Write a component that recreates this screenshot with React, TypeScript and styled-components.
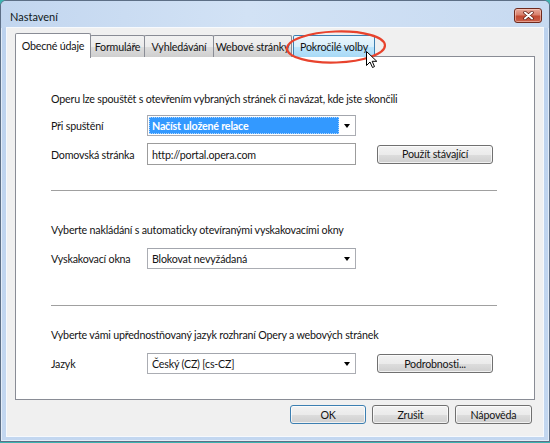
import React from 'react';
import styled, { createGlobalStyle, css } from 'styled-components';

const GlobalStyle = createGlobalStyle`
  html, body {
    margin: 0;
    padding: 0;
    background: #3db4b1;
  }
  body {
    font-family: Lato, 'Open Sans', sans-serif;
    font-size: 10.7px;
    letter-spacing: -0.2px;
    color: #141414;
  }
`;

const Screen = styled.div`
  width: 550px;
  height: 443px;
  background: #3db4b1;
  position: relative;
  overflow: hidden;
`;

const Window = styled.div`
  box-sizing: border-box;
  width: 550px;
  height: 442px;
  border: 1px solid #5d6f86;
  border-radius: 6px 6px 0 0;
  background: linear-gradient(180deg, #c9dbf1 0px, #bcd2ee 30px, #c3d7f0 100%);
  display: flex;
  flex-direction: column;
  box-shadow: inset 0 0 0 1px rgba(255, 255, 255, 0.55);
`;

const TitleBar = styled.div`
  height: 27px;
  display: flex;
  align-items: center;
  justify-content: space-between;
  padding: 0 7px 0 9px;
  background: linear-gradient(90deg, #c2d6ef 0%, #d2e2f5 45%, #c7daf1 100%);
  border-radius: 5px 5px 0 0;
`;

const Title = styled.span`
  font-size: 11px;
  letter-spacing: 0;
  color: #101820;
  padding-top: 3px;
`;

const CloseButton = styled.div`
  box-sizing: border-box;
  width: 28px;
  height: 15px;
  margin-top: 2px;
  border: 1px solid #6f2a1e;
  border-radius: 3px;
  background: linear-gradient(180deg, #e9a99a 0%, #d9806c 45%, #c24a32 55%, #c9604a 100%);
  display: flex;
  align-items: center;
  justify-content: center;
  box-shadow: inset 0 0 0 1px rgba(255, 220, 210, 0.5);
`;

const Client = styled.div`
  flex: 1;
  margin: 0 6px 5px;
  padding: 5px 8px 0;
  background: #f0f0f0;
  box-shadow: 0 0 0 1px rgba(255, 255, 255, 0.85);
  display: flex;
  flex-direction: column;
`;

const TabStrip = styled.div`
  display: flex;
  align-items: flex-start;
  height: 24px;
  position: relative;
  z-index: 1;
  margin-bottom: -1px;
`;

const Tab = styled.div<{ $w: number; $active?: boolean; $hover?: boolean }>`
  box-sizing: border-box;
  width: ${(p) => p.$w}px;
  height: 22px;
  margin-top: 2px;
  margin-left: -1px;
  border: 1px solid #898c95;
  border-bottom: none;
  border-radius: 2px 2px 0 0;
  background: linear-gradient(180deg, #f2f2f2 0%, #ebebeb 50%, #dddddd 51%, #cfcfcf 100%);
  display: flex;
  align-items: center;
  justify-content: center;
  white-space: nowrap;
  padding-bottom: 1px;
  ${(p) =>
    p.$hover &&
    css`
      border-color: #3c7fb1;
      background: linear-gradient(180deg, #eaf6fd 0%, #d9f0fc 50%, #bee6fd 51%, #a7d9f5 100%);
    `}
  ${(p) =>
    p.$active &&
    css`
      height: 25px;
      margin-top: 0;
      margin-left: 0;
      background: #ffffff;
      position: relative;
      z-index: 2;
      padding-bottom: 2px;
    `}
`;

const Panel = styled.div`
  box-sizing: border-box;
  height: 344px;
  border: 1px solid #898c95;
  background: #ffffff;
  padding: 0 0 0 35px;
`;

const Section = styled.div<{ $top: number; $bottom: number }>`
  padding-top: ${(p) => p.$top}px;
  padding-bottom: ${(p) => p.$bottom}px;
  display: flex;
  flex-direction: column;
`;

const Intro = styled.div`
  height: 16px;
  line-height: 16px;
  white-space: nowrap;
`;

const Row = styled.div<{ $gap: number }>`
  display: flex;
  align-items: center;
  margin-top: ${(p) => p.$gap}px;
`;

const Label = styled.div`
  width: 96px;
  white-space: nowrap;
`;

const SelectBox = styled.div`
  box-sizing: border-box;
  width: 209px;
  height: 21px;
  border: 1px solid #abadb3;
  border-top-color: #a3a6ad;
  background: #ffffff;
  display: flex;
  align-items: stretch;
  padding: 1px;
`;

const SelectValue = styled.div<{ $focused?: boolean }>`
  flex: 1;
  display: flex;
  align-items: center;
  padding-left: 3px;
  white-space: nowrap;
  ${(p) =>
    p.$focused &&
    css`
      background: #3399ff;
      color: #ffffff;
      font-weight: 700;
      outline: 1px dotted rgba(255, 255, 255, 0.6);
      outline-offset: -1px;
    `}
`;

const SelectArrow = styled.div`
  width: 15px;
  display: flex;
  align-items: center;
  justify-content: center;
  &::after {
    content: '';
    border-left: 3.5px solid transparent;
    border-right: 3.5px solid transparent;
    border-top: 4px solid #000000;
    margin-left: 1px;
  }
`;

const TextInput = styled.div`
  box-sizing: border-box;
  width: 209px;
  height: 22px;
  border: 1px solid #9c9c9c;
  background: #ffffff;
  display: flex;
  align-items: center;
  padding-left: 4px;
`;

const PushButton = styled.div<{ $w: number; $default?: boolean; $ml?: number }>`
  box-sizing: border-box;
  width: ${(p) => p.$w}px;
  height: 19px;
  margin-left: ${(p) => p.$ml ?? 0}px;
  border: 1px solid ${(p) => (p.$default ? '#3c7fb1' : '#707070')};
  border-radius: 3px;
  background: linear-gradient(180deg, #f2f2f2 0%, #ebebeb 50%, #dddddd 51%, #cfcfcf 100%);
  box-shadow: inset 0 0 0 1px rgba(255, 255, 255, 0.7);
  display: flex;
  align-items: center;
  justify-content: center;
  white-space: nowrap;
  padding-bottom: 1px;
`;

const Separator = styled.div`
  width: 446px;
  height: 1px;
  background: #a0a0a0;
  border-bottom: 1px solid #ffffff;
`;

const ButtonBar = styled.div`
  display: flex;
  justify-content: flex-end;
  gap: 6px;
  padding: 5px 3px 0 0;
`;

const Overlay = styled.svg<{ $x: number; $y: number }>`
  position: absolute;
  left: ${(p) => p.$x}px;
  top: ${(p) => p.$y}px;
  pointer-events: none;
  z-index: 5;
`;

function App(): JSX.Element {
  return (
    <Screen>
      <GlobalStyle />
      <Window>
        <TitleBar>
          <Title>Nastavení</Title>
          <CloseButton>
            <svg width="11" height="9" viewBox="0 0 11 9">
              <path d="M2 1.5 L9 7.5 M9 1.5 L2 7.5" stroke="#5a1a10" strokeWidth="3.4" strokeLinecap="round" />
              <path d="M2 1.5 L9 7.5 M9 1.5 L2 7.5" stroke="#ffffff" strokeWidth="2" strokeLinecap="round" />
            </svg>
          </CloseButton>
        </TitleBar>
        <Client>
          <TabStrip>
            <Tab $w={76} $active>Obecné údaje</Tab>
            <Tab $w={55}>Formuláře</Tab>
            <Tab $w={70}>Vyhledávání</Tab>
            <Tab $w={79}>Webové stránky</Tab>
            <Tab $w={82} $hover style={{ marginLeft: 1 }}>Pokročilé volby</Tab>
          </TabStrip>
          <Panel>
            <Section $top={34} $bottom={25}>
              <Intro>Operu lze spouštět s otevřením vybraných stránek či navázat, kde jste skončili</Intro>
              <Row $gap={8}>
                <Label>Při spuštění</Label>
                <SelectBox>
                  <SelectValue $focused>Načíst uložené relace</SelectValue>
                  <SelectArrow />
                </SelectBox>
              </Row>
              <Row $gap={7}>
                <Label>Domovská stránka</Label>
                <TextInput>http://portal.opera.com</TextInput>
                <PushButton $w={116} $ml={21}>Použít stávající</PushButton>
              </Row>
            </Section>
            <Separator />
            <Section $top={30} $bottom={36}>
              <Intro>Vyberte nakládání s automaticky otevíranými vyskakovacími okny</Intro>
              <Row $gap={10}>
                <Label>Vyskakovací okna</Label>
                <SelectBox>
                  <SelectValue>Blokovat nevyžádaná</SelectValue>
                  <SelectArrow />
                </SelectBox>
              </Row>
            </Section>
            <Separator />
            <Section $top={20} $bottom={0}>
              <Intro>Vyberte vámi upřednostňovaný jazyk rozhraní Opery a webových stránek</Intro>
              <Row $gap={10}>
                <Label>Jazyk</Label>
                <SelectBox>
                  <SelectValue>Český (CZ) [cs-CZ]</SelectValue>
                  <SelectArrow />
                </SelectBox>
                <PushButton $w={116} $ml={21}>Podrobnosti...</PushButton>
              </Row>
            </Section>
          </Panel>
          <ButtonBar>
            <PushButton $w={76} $default>OK</PushButton>
            <PushButton $w={77}>Zrušit</PushButton>
            <PushButton $w={77}>Nápověda</PushButton>
          </ButtonBar>
        </Client>
      </Window>
      <Overlay $x={284} $y={28} width="106" height="40" viewBox="0 0 106 40">
        <ellipse cx="52" cy="19" rx="49" ry="15.5" fill="none" stroke="#e8432d" strokeWidth="2.2" transform="rotate(-2 52 19)" />
      </Overlay>
      <Overlay $x={366} $y={51} width="13" height="18" viewBox="0 0 13 18">
        <path d="M0.5 0.5 L0.5 14.5 L4 11 L6.5 16.5 L8.5 15.6 L6.2 10.3 L10.8 10.3 Z" fill="#ffffff" stroke="#000000" strokeWidth="1" strokeLinejoin="round" />
      </Overlay>
    </Screen>
  );
}

export default App;
